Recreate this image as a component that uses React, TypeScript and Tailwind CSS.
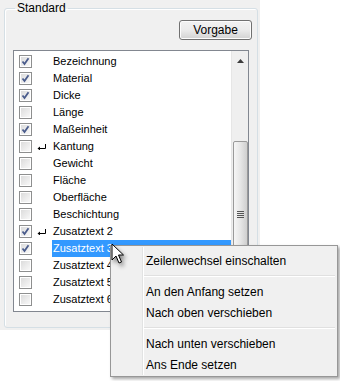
import React from "react";

type Row = { label: string; checked: boolean; wrap?: boolean; selected?: boolean };

const rows: Row[] = [
  { label: "Bezeichnung", checked: true },
  { label: "Material", checked: true },
  { label: "Dicke", checked: true },
  { label: "Länge", checked: false },
  { label: "Maßeinheit", checked: true },
  { label: "Kantung", checked: false, wrap: true },
  { label: "Gewicht", checked: false },
  { label: "Fläche", checked: false },
  { label: "Oberfläche", checked: false },
  { label: "Beschichtung", checked: false },
  { label: "Zusatztext 2", checked: true, wrap: true },
  { label: "Zusatztext 3", checked: true, selected: true },
  { label: "Zusatztext 4", checked: false },
  { label: "Zusatztext 5", checked: false },
  { label: "Zusatztext 6", checked: false },
];

const CheckBox = ({ checked }: { checked: boolean }) => (
  <div className="w-[13px] h-[13px] border border-[#8e8f8f] bg-white p-px shrink-0">
    <div className="w-full h-full bg-gradient-to-br from-[#dcdcdc] to-[#f8f8f8] flex items-center justify-center">
      {checked && (
        <svg width="9" height="9" viewBox="0 0 9 9">
          <path d="M1.5 4.5 L3.5 7 L7.5 1.2" fill="none" stroke="#4a5c8c" strokeWidth="1.8" />
        </svg>
      )}
    </div>
  </div>
);

const WrapIcon = () => (
  <svg width="9" height="6" viewBox="0 0 9 6" className="shrink-0">
    <path d="M8.5 0 V4.5 H1.5" fill="none" stroke="#000" strokeWidth="1" />
    <path d="M0.5 4.5 L3 2.5 V6.5 Z" fill="#000" />
  </svg>
);

const MenuItem = ({ children }: { children: React.ReactNode }) => (
  <div className="h-[21px] flex items-center pl-[35px]">{children}</div>
);

const MenuSep = () => (
  <div className="h-[10px] flex flex-col justify-center pl-[33px] pr-[2px]">
    <div className="h-px bg-[#e0e0e0]" />
    <div className="h-px bg-white" />
  </div>
);

export default function App() {
  return (
    <div className="relative w-[340px] h-[381px] bg-white overflow-hidden font-['Liberation_Sans',Arial,sans-serif] text-[11px] text-black">
      <div className="w-[260px] h-[330px] bg-[#f0f0f0] pl-[4px] pt-px">
        <fieldset className="w-[254px] h-[327px] border border-[#d5dfe5] rounded-[3px] px-[4px] shadow-[inset_1px_1px_0_#fff]">
          <legend className="ml-[6px] px-[2px] leading-[14px] text-[12px]">Standard</legend>
          <div className="flex justify-end pr-[1px] mt-[5px]">
            <button className="w-[73px] h-[20px] rounded-[3px] border border-[#707070] bg-gradient-to-b from-[#f2f2f2] via-[#ebebeb] to-[#d2d2d2] shadow-[inset_0_0_0_1px_#fcfcfc] text-[12px] leading-none">
              Vorgabe
            </button>
          </div>
          <div className="mt-[10px] mx-[4px] h-[262px] border border-[#828790] bg-white flex">
            <div className="flex-1 pt-[2px]">
              {rows.map((r) => (
                <div key={r.label} className="h-[17px] flex items-center">
                  <div className="w-[38px] flex items-center pl-[5px] gap-[5px]">
                    <CheckBox checked={r.checked} />
                    {r.wrap && <WrapIcon />}
                  </div>
                  <div
                    className={
                      r.selected
                        ? "flex-1 h-[17px] flex items-center pl-[1px] bg-[#3399ff] text-white"
                        : "flex-1 h-[17px] flex items-center pl-[1px]"
                    }
                  >
                    {r.label}
                  </div>
                </div>
              ))}
            </div>
            <div className="w-[17px] bg-[#efefef] border-l border-[#e6e6e6] flex flex-col">
              <div className="h-[17px] flex items-center justify-center pt-[3px]">
                <svg width="7" height="4" viewBox="0 0 7 4">
                  <path d="M3.5 0 L7 4 H0 Z" fill="#3c3c3c" />
                </svg>
              </div>
              <div className="mt-[73px] mx-px w-[15px] flex-1 rounded-[2px] border border-[#9a9a9a] bg-gradient-to-r from-[#f6f6f6] via-[#e6e6e6] to-[#cfcfcf] flex flex-col items-center pt-[69px] gap-px">
                <div className="w-[7px] h-px bg-[#555]" />
                <div className="w-[7px] h-px bg-[#555]" />
                <div className="w-[7px] h-px bg-[#555]" />
                <div className="w-[7px] h-px bg-[#555]" />
              </div>
            </div>
          </div>
        </fieldset>
      </div>

      <div className="absolute left-[110px] top-[245px] w-[228px] h-[132px] bg-[#f0f0f0] border border-[#979797] shadow-[2px_2px_3px_rgba(0,0,0,0.35)] pt-[4px] text-[12px]">
        <div className="absolute left-[31px] top-[1px] bottom-[1px] w-px bg-[#e2e3e3]" />
        <div className="absolute left-[32px] top-[1px] bottom-[1px] w-px bg-white" />
        <MenuItem>Zeilenwechsel einschalten</MenuItem>
        <MenuSep />
        <MenuItem>An den Anfang setzen</MenuItem>
        <MenuItem>Nach oben verschieben</MenuItem>
        <MenuSep />
        <MenuItem>Nach unten verschieben</MenuItem>
        <MenuItem>Ans Ende setzen</MenuItem>
      </div>

      <svg
        className="absolute left-[111px] top-[243px] drop-shadow-[2px_3px_2px_rgba(0,0,0,0.45)]"
        width="14"
        height="22"
        viewBox="0 0 14 22"
      >
        <path d="M1 1 V17 L5 13 L8 20 L10.5 19 L7.5 12 H12.5 Z" fill="#fff" stroke="#000" strokeWidth="1" strokeLinejoin="miter" />
      </svg>
    </div>
  );
}
